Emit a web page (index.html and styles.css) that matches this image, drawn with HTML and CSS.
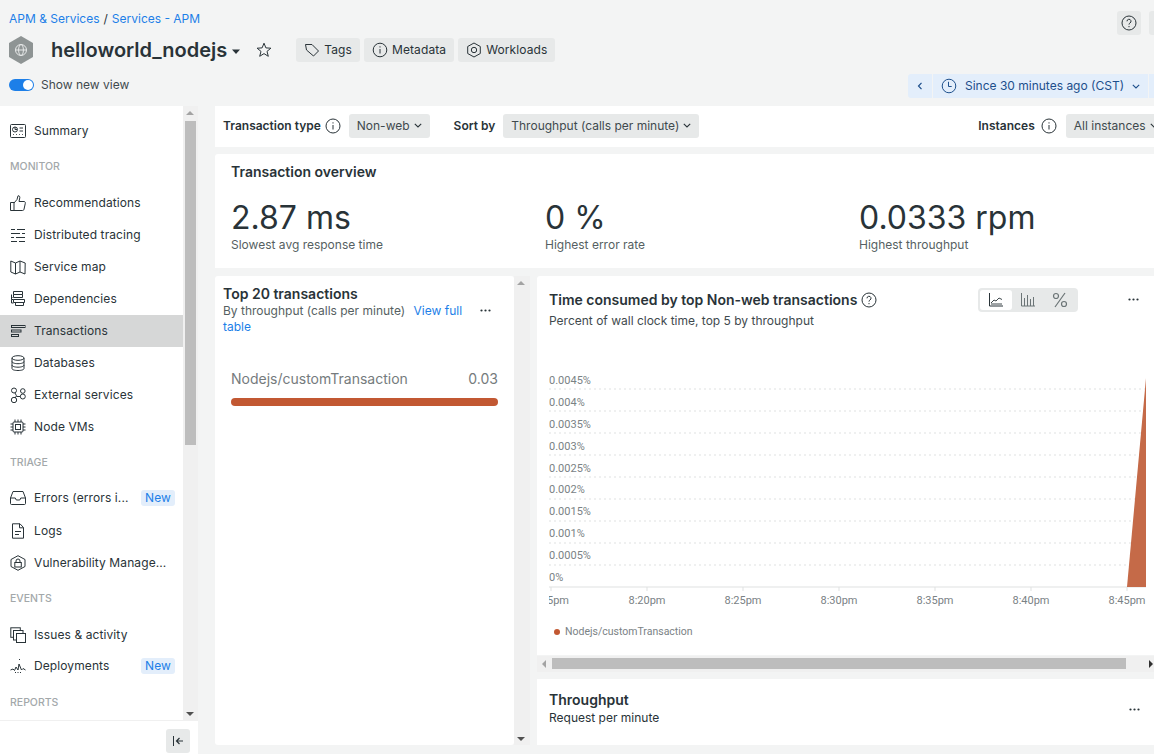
FILE: index.html
```html
<!DOCTYPE html>
<html lang="en">
<head>
    <meta charset="UTF-8">
    <title>helloworld_nodejs - APM</title>
    <link rel="stylesheet" href="styles.css">
</head>
<body>
    <header class="page-header">
        <div class="header-top">
            <div class="breadcrumb"><a>APM &amp; Services</a><span>/</span><a>Services - APM</a></div>
            <div class="top-actions">
                <button class="square-btn">
                    <svg width="16" height="16" viewBox="0 0 16 16" fill="none" stroke="#293338"><circle cx="8" cy="8" r="7"/><path d="M6 6.3a2 2 0 1 1 3 1.7c-.7.4-1 .8-1 1.6"/><path d="M8 11v1.2"/></svg>
                </button>
                <button class="square-btn"></button>
            </div>
        </div>
        <div class="title-row">
            <svg class="entity-icon" width="24" height="28" viewBox="0 0 24 28"><path d="M12 0l12 7v14l-12 7-12-7V7z" fill="#8e9494"/><g fill="none" stroke="#e6e8e8"><circle cx="12" cy="14" r="5.5"/><ellipse cx="12" cy="14" rx="2.4" ry="5.5"/><path d="M6.5 14h11"/></g></svg>
            <h1>helloworld_nodejs</h1>
            <svg class="caret" width="8" height="5" viewBox="0 0 8 5"><path d="M0 .5h8L4 5z" fill="#293338"/></svg>
            <svg class="star" width="16" height="16" viewBox="0 0 16 16"><path d="M8 1.200l1.900 4.700 5 .3-3.900 3.200 1.300 4.900L8 11.600l-4.300 2.700L5 9.400 1.100 6.200l5-.3z" fill="none" stroke="#293338"/></svg>
            <div class="meta-buttons">
                <button class="meta-btn"><svg width="16" height="16" viewBox="0 0 16 16" fill="none" stroke="#293338"><path d="M1.500 2.500h6.500l6.500 6.500-5 5L2.500 8z"/></svg>Tags</button>
                <button class="meta-btn"><svg width="16" height="16" viewBox="0 0 16 16" fill="none" stroke="#293338"><circle cx="8" cy="8" r="6.800"/><path d="M8 7v4.500M8 4.300v1.200"/></svg>Metadata</button>
                <button class="meta-btn"><svg width="16" height="16" viewBox="0 0 16 16" fill="none" stroke="#293338"><path d="M8 1l6.300 3.500v7L8 15l-6.300-3.500v-7z"/><circle cx="8" cy="8" r="2.700"/></svg>Workloads</button>
            </div>
        </div>
        <div class="view-row">
            <div class="view-toggle">
                <span class="switch"><span class="knob"></span></span>
                <span>Show new view</span>
            </div>
            <div class="time-picker">
                <button class="time-prev"><svg width="6" height="8" viewBox="0 0 6 8"><path d="M4.500.8L1.500 4l3 3.200" fill="none" stroke="#1d4f8c" stroke-width="1.200"/></svg></button>
                <button class="time-range">
                    <svg width="16" height="16" viewBox="0 0 16 16" fill="none" stroke="#1d4f8c"><circle cx="8" cy="8" r="6.800"/><path d="M7.500 3.800v4.700h3.200"/></svg>
                    Since 30 minutes ago (CST)
                    <svg class="time-caret" width="8" height="5" viewBox="0 0 8 5"><path d="M.8.800L4 4 7.200.8" fill="none" stroke="#1d4f8c" stroke-width="1.100"/></svg>
                </button>
                <button class="time-next"></button>
            </div>
        </div>
    </header>

    <div class="layout">
        <aside class="sidebar">
            <div class="side-scroll">
                <nav class="side-nav">
                    <a class="nav-item first"><svg width="16" height="16" viewBox="0 0 16 16" fill="none" stroke="#293338"><rect x=".5" y="1.500" width="15" height="13" rx="1"/><circle cx="5" cy="6.500" r="2.500"/><path d="M5 4v2.500h2M9.500 5H13M9.500 8H13M3 11.500h.8M6 11.500h.8M9 11.500h.8M12 11.500h.8"/></svg>Summary</a>
                    <div class="nav-label">MONITOR</div>
                    <a class="nav-item"><svg width="16" height="16" viewBox="0 0 16 16" fill="none" stroke="#293338"><path d="M.5 7.500h3.500v8H.5zM4 8l3-3.500L8 .8c1.500-.3 2 1 1.800 2L9 6.500h5c1.200 0 1.500 1 1.300 1.800l-1.300 6c-.2.800-.6 1.200-1.500 1.200H4"/></svg>Recommendations</a>
                    <a class="nav-item"><svg width="16" height="16" viewBox="0 0 16 16" fill="none" stroke="#293338"><path d="M1 2.500h4M7 2.500h8M1 6.500h9M12 6.500h3M1 10.500h3M6 10.500h9M1 14.500h6M9 14.500h6"/></svg>Distributed tracing</a>
                    <a class="nav-item"><svg width="16" height="16" viewBox="0 0 16 16" fill="none" stroke="#293338"><path d="M.8 2l4.700 2L10 2l5.200 2-.2 11-5-2-4.500 2-4.700-2zM5.500 4v11M10 2v11"/></svg>Service map</a>
                    <a class="nav-item"><svg width="16" height="16" viewBox="0 0 16 16" fill="none" stroke="#293338"><path d="M3.500 3.500V.5h9v3M3.500 3.500h9v3h-9zM1.500 3.500v5h2M2.500 6.500h-1M3.500 8.500h11v3h-11zM5.500 11.500v3h8v-3M1.500 8.500v3.500h2"/></svg>Dependencies</a>
                    <a class="nav-item active"><svg width="16" height="16" viewBox="0 0 16 16" fill="none" stroke="#293338"><rect x="1.500" y="2.500" width="13.500" height="2"/><rect x="1.500" y="7" width="9.500" height="2"/><rect x="1.500" y="11.500" width="7" height="2"/></svg>Transactions</a>
                    <a class="nav-item"><svg width="16" height="16" viewBox="0 0 16 16" fill="none" stroke="#293338"><ellipse cx="8" cy="3" rx="6" ry="2.300"/><path d="M2 3v10.500c0 1.300 2.700 2 6 2s6-.7 6-2V3M2 6.500c0 1.300 2.700 2.200 6 2.200s6-.9 6-2.200M2 10c0 1.300 2.700 2.200 6 2.200s6-.9 6-2.200"/></svg>Databases</a>
                    <a class="nav-item"><svg width="16" height="16" viewBox="0 0 16 16" fill="none" stroke="#293338"><circle cx="4" cy="3.500" r="2.500"/><circle cx="4" cy="13" r="2.700"/><circle cx="12.800" cy="9.500" r="2.500"/><circle cx="12.800" cy="4" r="2.300"/><path d="M5 6l1.500 2.800L5 11M6.500 9.500h4"/></svg>External services</a>
                    <a class="nav-item"><svg width="16" height="16" viewBox="0 0 16 16" fill="none" stroke="#293338"><rect x="3" y="3" width="10" height="10" rx="1"/><rect x="5.500" y="5.500" width="5" height="5"/><path d="M5 .5V3M8 .5V3M11 .5V3M5 13v2.500M8 13v2.500M11 13v2.500M.5 5H3M.5 8H3M.5 11H3M13 5h2.500M13 8h2.500M13 11h2.500"/></svg>Node VMs</a>
                    <div class="nav-label">TRIAGE</div>
                    <a class="nav-item lifted"><svg width="16" height="16" viewBox="0 0 16 16" fill="none" stroke="#293338"><path d="M3 1.500h10l2.500 6.500v5.500c0 .6-.4 1-1 1h-13c-.6 0-1-.4-1-1V8zM.5 8h4.800l1 2h3.500l1-2h4.700"/></svg><span class="nav-text">Errors (errors i...</span><span class="new-tag">New</span></a>
                    <a class="nav-item"><svg width="16" height="16" viewBox="0 0 16 16" fill="none" stroke="#293338"><path d="M2.500 .8h7.500l3.500 3.700v10.700h-11zM9.500 .8v4h4M5 8.500h6M5 11.500h4"/></svg>Logs</a>
                    <a class="nav-item"><svg width="16" height="16" viewBox="0 0 16 16" fill="none" stroke="#293338"><path d="M8 .7l7 3.800v7L8 15.300 1 11.500v-7z"/><rect x="4.800" y="7.500" width="6.500" height="4.500"/><path d="M6 7.500V6a2 2 0 0 1 4 0v1.500"/></svg>Vulnerability Manage...</a>
                    <div class="nav-label">EVENTS</div>
                    <a class="nav-item"><svg width="16" height="16" viewBox="0 0 16 16" fill="none" stroke="#293338"><rect x=".8" y=".8" width="9.500" height="9.500"/><rect x="3.500" y="3.500" width="9.500" height="9.500" fill="#fff"/><rect x="6.500" y="6.500" width="9" height="9" fill="#fff"/></svg>Issues &amp; activity</a>
                    <a class="nav-item lifted"><svg width="16" height="16" viewBox="0 0 16 16" fill="none" stroke="#293338"><path d="M.5 12l2.500-1 1.500 1.500L6 9l2 3 1-6 2.500 6 1.500-1.500 2.500 1.500"/><path d="M9.500 1v1.500M5 14.500h7" stroke-dasharray="1 1.500"/></svg><span class="nav-text">Deployments</span><span class="new-tag">New</span></a>
                    <div class="nav-label">REPORTS</div>
                </nav>
                <div class="side-scrollbar">
                    <span class="arrow-up"></span>
                    <span class="thumb"></span>
                    <span class="arrow-down"></span>
                </div>
            </div>
            <div class="side-footer">
                <button class="collapse-btn"><svg width="12" height="10" viewBox="0 0 12 10" fill="none" stroke="#293338"><path d="M1.500 0v10"/><path d="M11 5H4.500M7.500 2L4.500 5l3 3" stroke-width="1.200"/></svg></button>
            </div>
        </aside>

        <main class="content">
            <section class="filter-bar">
                <b>Transaction type</b>
                <svg class="info" width="16" height="16" viewBox="0 0 16 16" fill="none" stroke="#293338"><circle cx="8" cy="8" r="7"/><path d="M8 7v4.500M8 4.300v1.200"/></svg>
                <button class="select">Non-web<svg width="8" height="5" viewBox="0 0 8 5"><path d="M.8.800L4 4 7.200.8" fill="none" stroke="#293338" stroke-width="1.100"/></svg></button>
                <b class="sort-label">Sort by</b>
                <button class="select">Throughput (calls per minute)<svg width="8" height="5" viewBox="0 0 8 5"><path d="M.8.800L4 4 7.200.8" fill="none" stroke="#293338" stroke-width="1.100"/></svg></button>
                <b class="instances-label">Instances</b>
                <svg class="info wide" width="16" height="16" viewBox="0 0 16 16" fill="none" stroke="#293338"><circle cx="8" cy="8" r="7"/><path d="M8 7v4.500M8 4.300v1.200"/></svg>
                <button class="select">All instances<svg width="8" height="5" viewBox="0 0 8 5"><path d="M.8.800L4 4 7.200.8" fill="none" stroke="#293338" stroke-width="1.100"/></svg></button>
            </section>

            <section class="overview">
                <h2>Transaction overview</h2>
                <div class="stats">
                    <div class="stat"><div class="stat-value">2.87 ms</div><div class="stat-label">Slowest avg response time</div></div>
                    <div class="stat"><div class="stat-value">0 %</div><div class="stat-label">Highest error rate</div></div>
                    <div class="stat"><div class="stat-value">0.0333 rpm</div><div class="stat-label">Highest throughput</div></div>
                </div>
            </section>

            <div class="panels">
                <section class="top-card">
                    <div class="top-head">
                        <div>
                            <h3>Top 20 transactions</h3>
                            <p>By throughput (calls per minute) <a class="spaced">View full</a> <a>table</a></p>
                        </div>
                        <svg class="dots" width="11" height="3" viewBox="0 0 11 3" fill="#293338"><circle cx="1.500" cy="1.500" r="1.100"/><circle cx="5.500" cy="1.500" r="1.100"/><circle cx="9.500" cy="1.500" r="1.100"/></svg>
                    </div>
                    <div class="bar-row">
                        <span>Nodejs/customTransaction</span><span>0.03</span>
                    </div>
                    <div class="bar"></div>
                </section>
                <div class="mid-scrollbar">
                    <span class="arrow-up"></span>
                    <span class="arrow-down"></span>
                </div>
                <div class="charts">
                    <section class="chart-card">
                        <div class="chart-head">
                            <div class="chart-title">
                                <h3>Time consumed by top Non-web transactions
                                    <svg width="16" height="16" viewBox="0 0 16 16" fill="none" stroke="#293338"><circle cx="8" cy="8" r="7"/><path d="M6 6.300a2 2 0 1 1 3 1.700c-.7.4-1 .8-1 1.600"/><path d="M8 11v1.200"/></svg>
                                </h3>
                                <p>Percent of wall clock time, top 5 by throughput</p>
                            </div>
                            <div class="chart-types">
                                <span class="chart-type on"><svg width="16" height="14" viewBox="0 0 16 14" fill="none" stroke="#293338"><path d="M1.500 0v13H15"/><path d="M3 10l3-3 2 1 3-3 3 1.500" stroke-width=".9"/><path d="M3 11h11" stroke-width=".9"/></svg></span>
                                <span class="chart-type"><svg width="16" height="14" viewBox="0 0 16 14" fill="none" stroke="#6b7476"><path d="M1.500 0v13H15M4.500 5v8M7.500 2v11M10.500 6v7M13.500 4v9"/></svg></span>
                                <span class="chart-type"><svg width="16" height="16" viewBox="0 0 16 16" fill="none" stroke="#6b7476" stroke-width="1.200"><circle cx="4" cy="4" r="2.500"/><circle cx="12" cy="12" r="2.500"/><path d="M13 1L3 15"/></svg></span>
                            </div>
                            <svg class="dots" width="11" height="3" viewBox="0 0 11 3" fill="#293338"><circle cx="1.500" cy="1.500" r="1.100"/><circle cx="5.500" cy="1.500" r="1.100"/><circle cx="9.500" cy="1.500" r="1.100"/></svg>
                        </div>
                        <svg class="chart" width="597" height="272" viewBox="0 0 597 272">
                            <path class="grid" d="M0 47H597M0 69H597M0 91H597M0 113H597M0 135H597M0 157H597M0 179H597M0 201H597M0 223H597"/>
                            <path class="axis" d="M0 245H597M2 245v4M98 245v4M194 245v4M290 245v4M386 245v4M482 245v4M578 245v4"/>
                            <path d="M578 245L597 36V245z" fill="#c56a48"/>
                            <g class="y-labels">
                                <text x="0" y="42">0.0045%</text>
                                <text x="0" y="64">0.004%</text>
                                <text x="0" y="86">0.0035%</text>
                                <text x="0" y="108">0.003%</text>
                                <text x="0" y="130">0.0025%</text>
                                <text x="0" y="151">0.002%</text>
                                <text x="0" y="173">0.0015%</text>
                                <text x="0" y="195">0.001%</text>
                                <text x="0" y="217">0.0005%</text>
                                <text x="0" y="239">0%</text>
                            </g>
                            <g class="x-labels">
                                <text class="first-tick" x="-2" y="262">5pm</text>
                                <text x="98" y="262">8:20pm</text>
                                <text x="194" y="262">8:25pm</text>
                                <text x="290" y="262">8:30pm</text>
                                <text x="386" y="262">8:35pm</text>
                                <text x="482" y="262">8:40pm</text>
                                <text x="578" y="262">8:45pm</text>
                            </g>
                        </svg>
                        <div class="legend"><span class="legend-dot"></span>Nodejs/customTransaction</div>
                    </section>
                    <div class="h-scrollbar">
                        <span class="arrow-left"></span>
                        <span class="h-thumb"></span>
                        <span class="arrow-right"></span>
                    </div>
                    <section class="throughput-card">
                        <div>
                            <h3>Throughput</h3>
                            <p>Request per minute</p>
                        </div>
                        <svg class="dots" width="11" height="3" viewBox="0 0 11 3" fill="#293338"><circle cx="1.500" cy="1.500" r="1.100"/><circle cx="5.500" cy="1.500" r="1.100"/><circle cx="9.500" cy="1.500" r="1.100"/></svg>
                    </section>
                </div>
            </div>
        </main>
    </div>
</body>
</html>
```

FILE: styles.css
```css
* {
    box-sizing: border-box;
}
html, body {
    width: 1154px;
    height: 754px;
    overflow: hidden;
}
body {
    margin: 0;
    background: #f3f4f4;
    color: #293338;
    font-family: Inter, "Liberation Sans", sans-serif;
    font-size: 12px;
    line-height: 16px;
}
button {
    font: inherit;
    color: inherit;
    border: none;
    cursor: pointer;
    white-space: nowrap;
}
h1, h2, h3, p {
    margin: 0;
}
a {
    color: #1d7fe8;
}

/* Header */
.page-header {
    height: 106px;
    padding: 11px 0 0 9px;
    width: 1173px;
}
.header-top {
    display: flex;
    justify-content: space-between;
    height: 16px;
}
.breadcrumb {
    display: flex;
    gap: 4px;
}
.top-actions {
    display: flex;
    gap: 8px;
}
.square-btn {
    width: 24px;
    height: 24px;
    background: #e7e9e9;
    border-radius: 3px;
    padding: 4px;
    display: flex;
}
.title-row {
    display: flex;
    align-items: center;
    height: 24px;
    margin-top: 11px;
}
.entity-icon {
    margin-right: 18px;
}
.title-row h1 {
    font-size: 20px;
    font-weight: 600;
    line-height: 24px;
}
.caret {
    margin: 2px 0 0 5px;
}
.star {
    margin-left: 16px;
}
.meta-buttons {
    display: flex;
    gap: 4px;
    margin-left: 24px;
}
.meta-btn {
    height: 24px;
    display: flex;
    align-items: center;
    gap: 4px;
    padding: 0 8px;
    background: #e7e9e9;
    border-radius: 3px;
    letter-spacing: .1px;
}
.view-row {
    display: flex;
    justify-content: space-between;
    align-items: flex-start;
    margin-top: 11px;
}
.view-toggle {
    display: flex;
    align-items: center;
    gap: 7px;
    height: 24px;
    color: #3f4a4e;
}
.switch {
    width: 25px;
    height: 12px;
    border-radius: 6px;
    background: #1d7fe8;
    display: flex;
    justify-content: flex-end;
    padding: 1px;
}
.knob {
    width: 10px;
    height: 10px;
    border-radius: 50%;
    background: #fff;
}
.time-picker {
    display: flex;
    height: 24px;
    margin-top: 1px;
    color: #1d4f8c;
}
.time-picker button {
    background: #e3eefb;
    color: inherit;
    display: flex;
    align-items: center;
    height: 24px;
}
.time-prev {
    width: 24px;
    justify-content: center;
    border-radius: 3px 0 0 3px;
    margin-right: 1px;
}
.time-range {
    width: 215px;
    padding: 0 8px;
    gap: 8px;
}
.time-next {
    width: 24px;
    margin-left: 1px;
}

/* Sidebar */
.layout {
    display: flex;
    height: 648px;
}
.sidebar {
    width: 198px;
    flex-shrink: 0;
    display: flex;
    flex-direction: column;
}
.side-scroll {
    display: flex;
    height: 614px;
}
.side-nav {
    width: 183px;
    background: #fff;
    padding-top: 9px;
    overflow: hidden;
}
.nav-item {
    display: flex;
    align-items: center;
    height: 32px;
    padding-left: 10px;
    color: #293338;
    white-space: nowrap;
    letter-spacing: .1px;
}
.nav-item > svg {
    margin-right: 8px;
    flex-shrink: 0;
}
.nav-item.active {
    background: #d6d7d7;
}
.nav-item.lifted {
    padding-bottom: 2px;
}
.nav-text {
    width: 107px;
}
.new-tag {
    background: #e3eefb;
    color: #1d7fe8;
    padding: 0 4px;
    border-radius: 3px;
    line-height: 16px;
}
.nav-label {
    height: 40px;
    padding: 12px 0 0 10px;
    font-size: 10.500px;
    font-weight: 500;
    color: #a3a8aa;
}
.side-scrollbar {
    width: 15px;
    background: #f0f0f0;
    position: relative;
}
.thumb {
    position: absolute;
    left: 2px;
    top: 15px;
    width: 11px;
    height: 324px;
    background: #bdbdbd;
}
.arrow-up, .arrow-down {
    position: absolute;
    left: 3px;
    width: 0;
    height: 0;
    border-left: 4px solid transparent;
    border-right: 4px solid transparent;
}
.arrow-up {
    top: 5px;
    border-bottom: 4px solid #a3a3a3;
}
.arrow-down {
    bottom: 4px;
    border-top: 4px solid #505050;
}
.side-footer {
    height: 34px;
    background: #fff;
    border-top: 1px solid #f0f0f0;
    display: flex;
    justify-content: flex-end;
    align-items: flex-start;
    padding: 8px 8px 0 0;
}
.collapse-btn {
    width: 24px;
    height: 24px;
    background: #e7e9e9;
    border-radius: 3px;
    display: flex;
    align-items: center;
    justify-content: center;
}

/* Content */
.content {
    width: 956px;
    padding-left: 17px;
    flex-shrink: 0;
}
.filter-bar {
    display: flex;
    align-items: center;
    height: 41px;
    background: #fff;
    padding: 0 0 2px 8px;
    width: 960px;
    white-space: nowrap;
}
.filter-bar b {
    font-weight: 600;
}
.info {
    margin-left: 4px;
    flex-shrink: 0;
}
.info.wide {
    margin: 0 1px 0 6px;
}
.select {
    height: 24px;
    background: #e7e9e9;
    border-radius: 3px;
    padding: 0 8px;
    display: flex;
    align-items: center;
    gap: 4px;
    margin-left: 8px;
    color: #3f4a4e;
}
.sort-label {
    margin-left: 24px;
}
.instances-label {
    margin-left: 279px;
}
.overview {
    height: 114px;
    margin-top: 7px;
    background: #fff;
    padding: 9px 16px;
    border-radius: 3px 0 0 0;
}
.overview h2, h3 {
    font-size: 14px;
    font-weight: 600;
    line-height: 17px;
}
.stats {
    display: flex;
    margin-top: 22px;
}
.stat {
    width: 314px;
    flex-shrink: 0;
}
.stat-value {
    font-size: 32px;
    line-height: 32px;
}
.stat-label {
    color: #565f62;
    margin-top: 3px;
}
.panels {
    display: flex;
    margin-top: 8px;
    height: 469px;
}
.top-card {
    width: 299px;
    background: #fff;
    border-radius: 3px;
    padding: 9px 8px;
}
.top-head {
    display: flex;
    justify-content: space-between;
    height: 59px;
}
.top-head p {
    width: 245px;
    color: #565f62;
    margin-top: 1px;
}
.spaced {
    margin-left: 5px;
}
.dots {
    flex-shrink: 0;
}
.top-head .dots {
    margin: 24px 15px 0 0;
}
.bar-row {
    display: flex;
    justify-content: space-between;
    padding: 27px 8px 0;
    font-size: 14px;
    color: #757b7d;
}
.bar {
    height: 8px;
    margin: 11px 8px 0;
    background: #c25832;
    border-radius: 4px;
}
.mid-scrollbar {
    width: 16px;
    margin-right: 7px;
    background: #f0f0f0;
    position: relative;
}
.charts {
    width: 617px;
    flex-shrink: 0;
}
.chart-card {
    height: 379px;
    background: #fff;
    padding: 15px 0 0 12px;
    border-radius: 3px 0 0 0;
}
.chart-head {
    display: flex;
    height: 35px;
}
.chart-title {
    width: 330px;
    flex-shrink: 0;
}
.chart-head h3 {
    display: flex;
    align-items: center;
    gap: 4px;
    white-space: nowrap;
}
.chart-head p {
    color: #3f4a4e;
    margin-top: 5px;
}
.chart-types {
    display: flex;
    margin-left: 99px;
    width: 100px;
    height: 24px;
    margin-top: -3px;
    background: #e7e9e9;
    border-radius: 4px;
    padding: 2px;
}
.chart-type {
    width: 32px;
    display: flex;
    align-items: center;
    justify-content: center;
}
.chart-type.on {
    background: #fff;
    border-radius: 3px;
}
.chart-head .dots {
    margin: 7px 0 0 50px;
}
.chart {
    display: block;
    margin-top: 16px;
}
.grid {
    stroke: #dfe1e1;
    stroke-dasharray: 2 3;
    fill: none;
}
.axis {
    stroke: #dfe1e1;
    fill: none;
}
.chart text {
    font-family: Roboto, Inter, sans-serif;
    font-size: 11px;
    fill: #7a8285;
}
.x-labels text {
    text-anchor: middle;
}
.x-labels .first-tick {
    text-anchor: start;
}
.legend {
    display: flex;
    align-items: center;
    gap: 5px;
    margin-top: 10px;
    padding-left: 5px;
    font-family: Roboto, Inter, sans-serif;
    font-size: 10.500px;
    color: #7a8285;
}
.legend-dot {
    width: 6px;
    height: 6px;
    border-radius: 50%;
    background: #c25832;
}
.h-scrollbar {
    height: 16px;
    margin-top: 1px;
    background: #f0f0f0;
    position: relative;
}
.h-thumb {
    position: absolute;
    left: 15px;
    top: 2px;
    width: 574px;
    height: 11px;
    background: #bdbdbd;
}
.arrow-left, .arrow-right {
    position: absolute;
    top: 4px;
    width: 0;
    height: 0;
    border-top: 4px solid transparent;
    border-bottom: 4px solid transparent;
}
.arrow-left {
    left: 5px;
    border-right: 4px solid #a3a3a3;
}
.arrow-right {
    left: 612px;
    border-left: 4px solid #303030;
}
.throughput-card {
    height: 66px;
    margin-top: 7px;
    background: #fff;
    padding: 12px 14px 0 12px;
    display: flex;
    justify-content: space-between;
}
.throughput-card .dots {
    margin-top: 17px;
}
.throughput-card p {
    margin-top: 2px;
}
```
